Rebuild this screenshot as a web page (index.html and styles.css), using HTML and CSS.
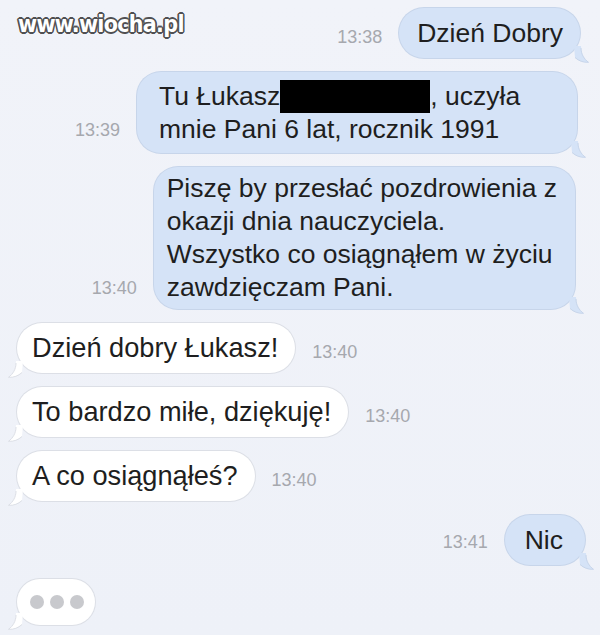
FILE: index.html
```html
<!DOCTYPE html>
<html lang="pl">
<head>
<meta charset="utf-8">
<title>Czat</title>
<link rel="stylesheet" href="styles.css">
</head>
<body>
<div class="page">
  <div class="watermark">www.wiocha.pl</div>

  <div class="row out r1">
    <span class="time">13:38</span>
    <div class="bubble sent">Dzień Dobry<svg class="tail" viewBox="0 0 16 18" width="16" height="18"><path class="tf" d="M1 1 L8 1 C8 9 11 14 15.5 17.3 C10 17.6 6 16 2 12.5 Z"/><path class="ts" d="M8 3 C8 9 11 14 15.5 17.3 C10 17.6 6 16 2 12.5"/></svg></div>
  </div>

  <div class="row out r2">
    <span class="time t2">13:39</span>
    <div class="bubble sent b2">Tu Łukasz<span class="redact"></span>, uczyła<br>mnie Pani 6 lat, rocznik 1991<svg class="tail" viewBox="0 0 16 18" width="16" height="18"><path class="tf" d="M1 1 L8 1 C8 9 11 14 15.5 17.3 C10 17.6 6 16 2 12.5 Z"/><path class="ts" d="M8 3 C8 9 11 14 15.5 17.3 C10 17.6 6 16 2 12.5"/></svg></div>
  </div>

  <div class="row out r3">
    <span class="time">13:40</span>
    <div class="bubble sent b3">Piszę by przesłać pozdrowienia z<br>okazji dnia nauczyciela.<br>Wszystko co osiągnąłem w życiu<br>zawdzięczam Pani.<svg class="tail" viewBox="0 0 16 18" width="16" height="18"><path class="tf" d="M1 1 L8 1 C8 9 11 14 15.5 17.3 C10 17.6 6 16 2 12.5 Z"/><path class="ts" d="M8 3 C8 9 11 14 15.5 17.3 C10 17.6 6 16 2 12.5"/></svg></div>
  </div>

  <div class="row in">
    <div class="bubble recv">Dzień dobry Łukasz!<svg class="tail" viewBox="0 0 16 18" width="16" height="18"><path class="tf" d="M15 1 L8 1 C8 9 5 14 0.5 17.3 C6 17.6 10 16 14 12.5 Z"/><path class="ts" d="M8 3 C8 9 5 14 0.5 17.3 C6 17.6 10 16 14 12.5"/></svg></div>
    <span class="time">13:40</span>
  </div>

  <div class="row in">
    <div class="bubble recv">To bardzo miłe, dziękuję!<svg class="tail" viewBox="0 0 16 18" width="16" height="18"><path class="tf" d="M15 1 L8 1 C8 9 5 14 0.5 17.3 C6 17.6 10 16 14 12.5 Z"/><path class="ts" d="M8 3 C8 9 5 14 0.5 17.3 C6 17.6 10 16 14 12.5"/></svg></div>
    <span class="time">13:40</span>
  </div>

  <div class="row in">
    <div class="bubble recv">A co osiągnąłeś?<svg class="tail" viewBox="0 0 16 18" width="16" height="18"><path class="tf" d="M15 1 L8 1 C8 9 5 14 0.5 17.3 C6 17.6 10 16 14 12.5 Z"/><path class="ts" d="M8 3 C8 9 5 14 0.5 17.3 C6 17.6 10 16 14 12.5"/></svg></div>
    <span class="time">13:40</span>
  </div>

  <div class="row out r4">
    <span class="time t4">13:41</span>
    <div class="bubble sent nic">Nic<svg class="tail" viewBox="0 0 16 18" width="16" height="18"><path class="tf" d="M1 1 L8 1 C8 9 11 14 15.5 17.3 C10 17.6 6 16 2 12.5 Z"/><path class="ts" d="M8 3 C8 9 11 14 15.5 17.3 C10 17.6 6 16 2 12.5"/></svg></div>
  </div>

  <div class="row in typing-row">
    <div class="bubble recv typing"><span class="dot"></span><span class="dot"></span><span class="dot"></span><svg class="tail" viewBox="0 0 16 18" width="16" height="18"><path class="tf" d="M15 1 L8 1 C8 9 5 14 0.5 17.3 C6 17.6 10 16 14 12.5 Z"/><path class="ts" d="M8 3 C8 9 5 14 0.5 17.3 C6 17.6 10 16 14 12.5"/></svg></div>
  </div>
</div>
</body>
</html>
```

FILE: styles.css
```css
* { box-sizing: border-box; }

html, body {
  margin: 0;
  padding: 0;
}

body {
  width: 600px;
  height: 635px;
  overflow: hidden;
  background: linear-gradient(180deg, #f1f3f9 0%, #eef1f8 100%);
  font-family: "Liberation Sans", Arial, sans-serif;
  color: #1e1e20;
}

.page {
  position: relative;
  height: 635px;
  padding-top: 8px;
  display: flex;
  flex-direction: column;
  gap: 14px;
}

.watermark {
  position: absolute;
  top: 11px;
  left: 18px;
  font-family: "DejaVu Sans", sans-serif;
  font-weight: bold;
  font-stretch: condensed;
  font-size: 23px;
  line-height: 26px;
  letter-spacing: -0.7px;
  color: #ffffff;
  text-shadow:
    1.7px 0 0 #505052, -1.7px 0 0 #505052, 0 1.7px 0 #505052, 0 -1.7px 0 #505052,
    1.2px 1.2px 0 #505052, -1.2px 1.2px 0 #505052, 1.2px -1.2px 0 #505052, -1.2px -1.2px 0 #505052;
}

.row {
  display: flex;
  align-items: flex-end;
  gap: 17px;
}

.row.out { justify-content: flex-end; padding-right: 20px; }
.row.in { justify-content: flex-start; padding-left: 17px; }

.row.r2 { padding-right: 23px; }
.row.r3 { padding-right: 25px; }
.row.r4 { padding-right: 15px; }

.time {
  font-size: 18px;
  line-height: 20px;
  color: #a6a8ae;
  margin-bottom: 11px;
  white-space: nowrap;
}

.time.t2 { margin-bottom: 13px; }
.time.t4 { margin-bottom: 13px; }

.bubble {
  position: relative;
  font-size: 26.5px;
  line-height: 32px;
  padding: 9px 17px 9px 18px;
  border-radius: 25px;
  white-space: nowrap;
}

.sent {
  background: #d5e3f7;
  box-shadow: 0 0 0 1px #c7d5ea;
}

.recv {
  background: #ffffff;
  box-shadow: 0 0 0 1px #dcdfe6;
  font-size: 27.2px;
  padding: 9px 17px 9px 15px;
}

.nic { padding: 9px 22px 9px 20px; }

.b2 {
  width: 440px;
  padding: 8px 16px 8px 22px;
  border-radius: 24px;
}

.b3 {
  line-height: 33px;
  padding: 5px 18px 5px 13px;
  border-radius: 24px;
}

.redact {
  display: inline-block;
  width: 150px;
  height: 33px;
  background: #000;
  vertical-align: top;
}

.tail {
  position: absolute;
  bottom: -5px;
  display: block;
}

.sent .tail { right: -9px; }
.recv .tail { left: -9px; }

.sent .tf { fill: #d5e3f7; }
.sent .ts { fill: none; stroke: #c7d5ea; stroke-width: 1; }
.recv .tf { fill: #ffffff; }
.recv .ts { fill: none; stroke: #dcdfe6; stroke-width: 1; }

.typing {
  width: 78px;
  height: 46px;
  padding: 0 0 0 1px;
  border-radius: 23px;
  display: flex;
  align-items: center;
  justify-content: center;
  gap: 6px;
}

.typing-row { padding-left: 15px; }

.dot {
  width: 14px;
  height: 14px;
  border-radius: 50%;
  background: #c8c9cd;
}
```
